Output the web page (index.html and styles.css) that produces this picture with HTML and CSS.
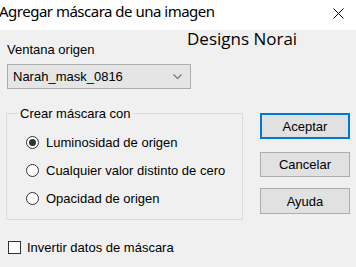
FILE: index.html
```html
<!DOCTYPE html>
<html lang="es">

<head>
    <meta charset="UTF-8">
    <meta name="viewport" content="width=device-width, initial-scale=1.0">
    <title>Agregar máscara de una imagen</title>
    <link rel="stylesheet" href="styles.css">
</head>

<body>
    <div class="dialog">
        <header class="title-bar">
            <span class="title-text">Agregar máscara de una imagen</span>
            <button class="close-btn" aria-label="Cerrar">
                <svg width="11" height="11" viewBox="0 0 11 11">
                    <path d="M0.5 0.5 L10.5 10.5 M10.5 0.5 L0.5 10.5" stroke="#000" stroke-width="1" fill="none"/>
                </svg>
            </button>
        </header>

        <main class="dialog-body">
            <div class="watermark">Designs Norai</div>

            <div class="source-block">
                <label class="field-label">Ventana origen</label>
                <div class="combo">
                    <span class="combo-value">Narah_mask_0816</span>
                    <svg class="combo-arrow" width="9" height="6" viewBox="0 0 9 6">
                        <path d="M0.5 0.5 L4.5 4.5 L8.5 0.5" stroke="#707070" stroke-width="1.1" fill="none"/>
                    </svg>
                </div>
            </div>

            <div class="middle-row">
                <fieldset class="group-box">
                    <legend>Crear máscara con</legend>
                    <div class="radio-row">
                        <span class="radio checked"></span>
                        <span class="radio-label">Luminosidad de origen</span>
                    </div>
                    <div class="radio-row">
                        <span class="radio"></span>
                        <span class="radio-label">Cualquier valor distinto de cero</span>
                    </div>
                    <div class="radio-row">
                        <span class="radio"></span>
                        <span class="radio-label">Opacidad de origen</span>
                    </div>
                </fieldset>

                <div class="button-column">
                    <button class="dlg-btn default-btn">Aceptar</button>
                    <button class="dlg-btn cancel-btn">Cancelar</button>
                    <button class="dlg-btn help-btn">Ayuda</button>
                </div>
            </div>

            <div class="check-row">
                <span class="checkbox"></span>
                <span class="check-label">Invertir datos de máscara</span>
            </div>
        </main>
    </div>
</body>

</html>
```

FILE: styles.css
```css
* {
    margin: 0;
    padding: 0;
    box-sizing: border-box;
}

body {
    background-color: #f0f0f0;
    width: 356px;
    height: 267px;
    overflow: hidden;
    font-family: "Liberation Sans", Arial, sans-serif;
    font-size: 13px;
    color: #000;
}

.dialog {
    position: relative;
}

.title-bar {
    height: 30px;
    background-color: #fff;
    display: flex;
    justify-content: space-between;
    align-items: flex-start;
    padding: 1px 12px 0 0;
}

.title-text {
    font-family: "Noto Sans", "Open Sans", sans-serif;
    font-size: 15px;
    letter-spacing: -0.5px;
    line-height: 20px;
    margin-left: -1px;
}

.close-btn {
    border: none;
    background: none;
    margin-top: 7px;
    line-height: 0;
}

.dialog-body {
    padding: 0 6px;
}

.watermark {
    position: absolute;
    left: 187px;
    top: 30px;
    font-family: "Open Sans", "Noto Sans", sans-serif;
    font-size: 17px;
    line-height: 18px;
}

.source-block {
    padding-left: 1px;
}

.field-label {
    display: block;
    line-height: 15px;
    margin-top: 12px;
}

.combo {
    width: 184px;
    height: 25px;
    margin-top: 7px;
    background-color: #e5e5e5;
    border: 1px solid #adadad;
    display: flex;
    align-items: center;
    justify-content: space-between;
    padding: 0 8px 0 5px;
}

.combo-arrow {
    margin-top: 1px;
}

.middle-row {
    display: flex;
    align-items: flex-start;
    margin-top: 17px;
}

.group-box {
    width: 237px;
    border: 1px solid #dcdcdc;
    padding: 0 0 7px 19px;
}

.group-box legend {
    margin-left: -8px;
    padding: 0 2px;
    line-height: 15px;
}

.radio-row {
    display: flex;
    align-items: center;
    gap: 7px;
    height: 28px;
}

.group-box legend + .radio-row {
    margin-top: 7px;
}

.radio {
    width: 13px;
    height: 13px;
    border: 1px solid #333;
    border-radius: 50%;
    background-color: #fff;
    display: flex;
    align-items: center;
    justify-content: center;
}

.radio.checked::after {
    content: "";
    width: 7px;
    height: 7px;
    border-radius: 50%;
    background-color: #333;
}

.button-column {
    display: flex;
    flex-direction: column;
    margin: 7px 0 0 17px;
}

.dlg-btn {
    width: 90px;
    height: 25px;
    background-color: #e1e1e1;
    border: 1px solid #adadad;
    font-family: "Liberation Sans", Arial, sans-serif;
    font-size: 13px;
    color: #000;
}

.default-btn {
    height: 26px;
    border: 2px solid #0078d7;
}

.cancel-btn {
    margin-top: 13px;
}

.help-btn {
    margin-top: 11px;
    height: 26px;
}

.check-row {
    display: flex;
    align-items: center;
    gap: 6px;
    margin: 20px 0 0 2px;
}

.checkbox {
    width: 13px;
    height: 13px;
    border: 1px solid #333;
    background-color: #fff;
}
```
